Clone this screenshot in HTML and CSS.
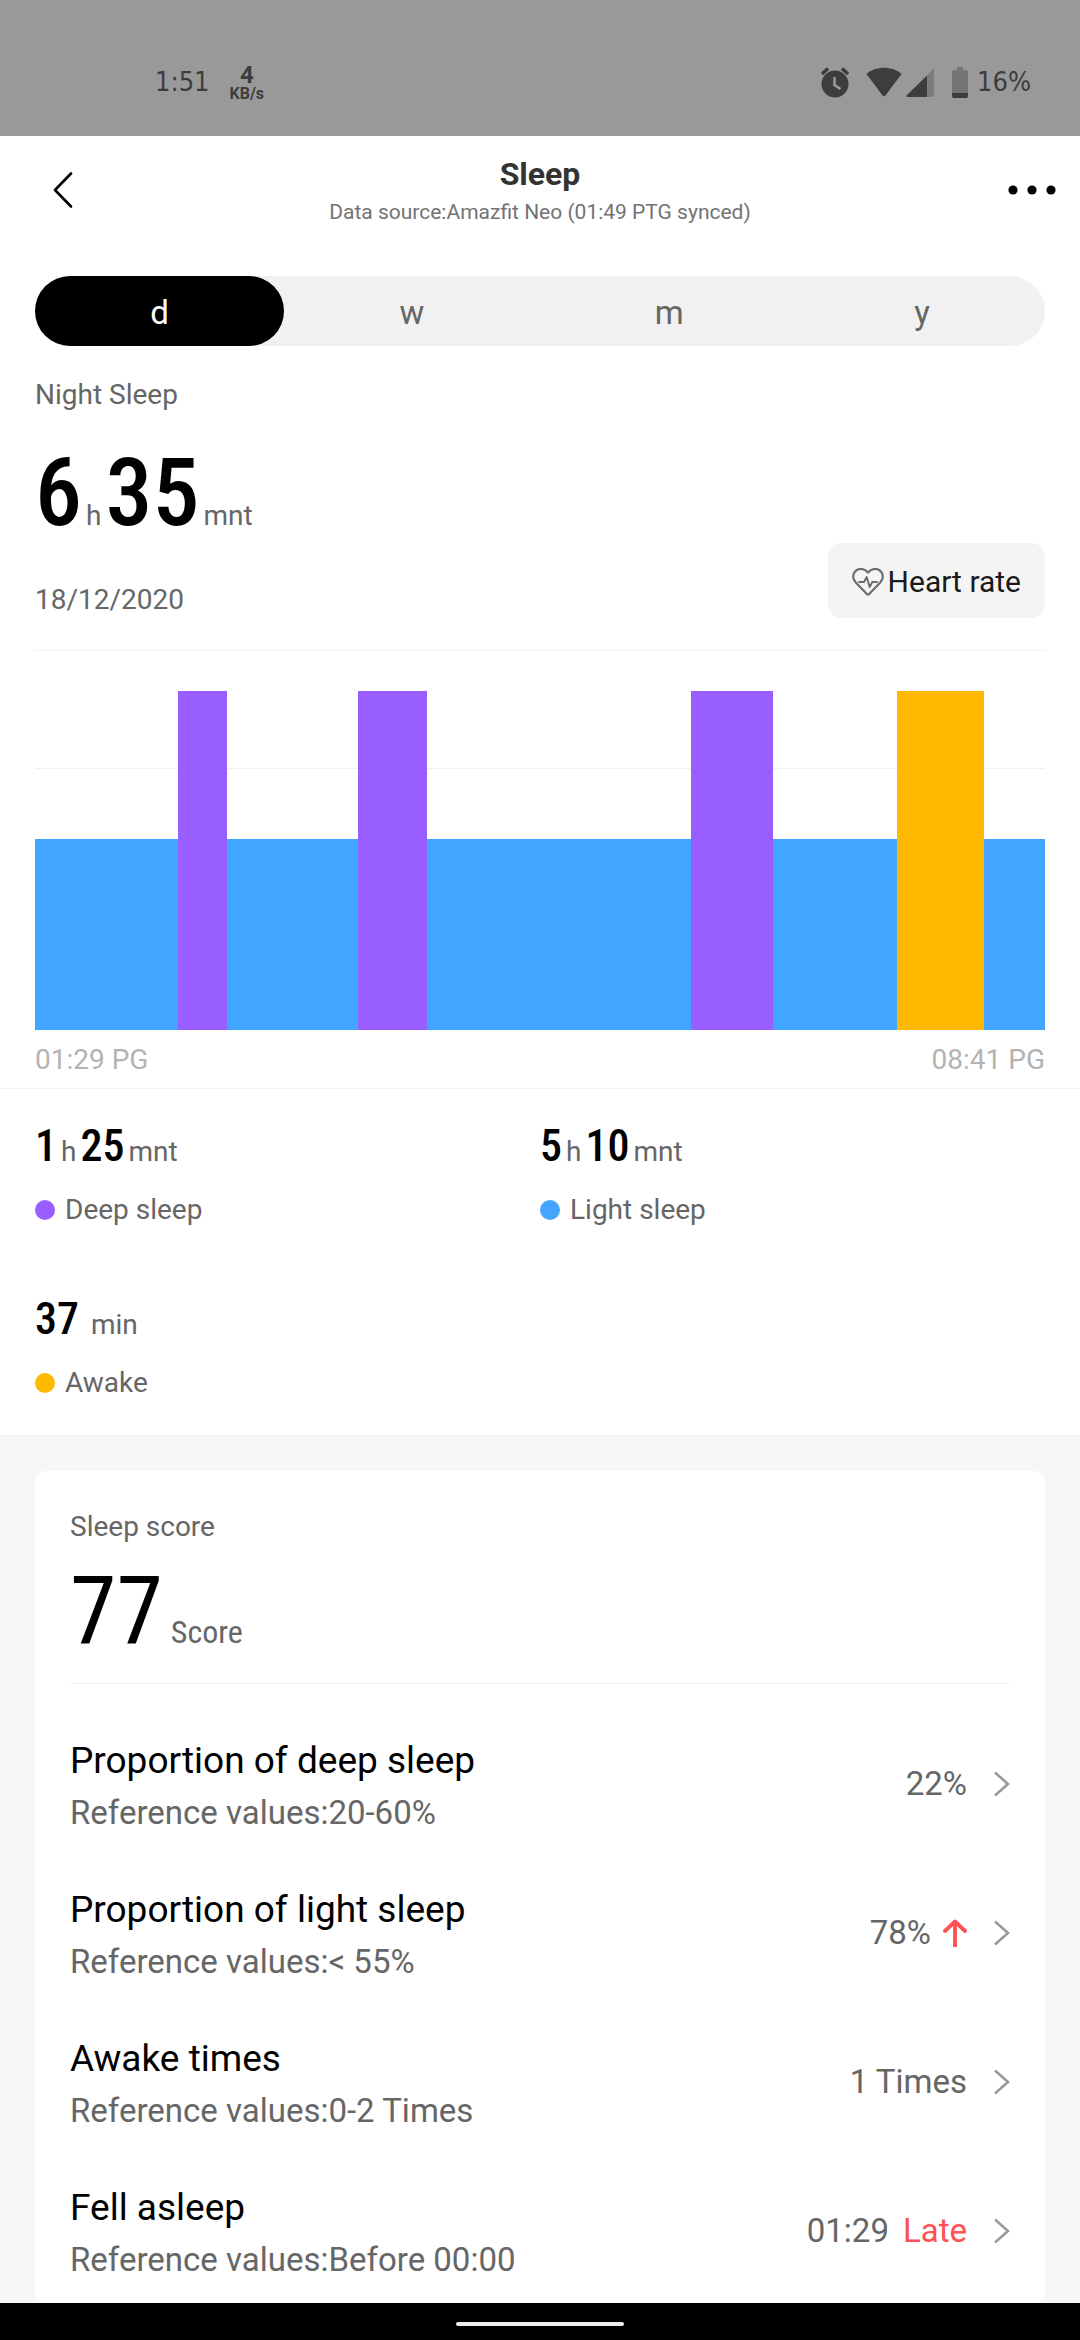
FILE: index.html
```html
<!DOCTYPE html>
<html lang="en">
<head>
<meta charset="utf-8">
<meta name="viewport" content="width=device-width, initial-scale=1">
<title>Sleep</title>
<link rel="stylesheet" href="styles.css">
</head>
<body>
<div class="app">
  <div class="statusbar">
    <span class="clock">1:51</span>
    <span class="netspeed"><b>4</b><small>KB/s</small></span>
    <span class="status-icons">
      <svg class="ic-alarm" width="30" height="32" viewBox="0 0 30 32"><circle cx="15" cy="18" r="13.500" fill="#3d3d3d"/><path d="M2 8 8 2.500M28 8 22 2.500" stroke="#3d3d3d" stroke-width="3.500" fill="none"/><path d="M14.500 11v8l6 4" stroke="#999" stroke-width="2.600" fill="none"/></svg>
      <svg class="ic-wifi" width="36" height="30" viewBox="0 0 36 30"><path d="M.5 7C5 3 11 .8 18 .8S31 3 35.500 7L19.500 28.500q-1.500 1.600-3 0z" fill="#3d3d3d"/></svg>
      <svg class="ic-signal" width="28" height="29" viewBox="0 0 28 29"><path d="M28 0v27q0 2-2 2H20V8.500z" fill="#7c7c7c"/><path d="M21 7.500V29H1.500q-2-.5-.5-2z" fill="#3d3d3d"/></svg>
      <svg class="ic-battery" width="16" height="31" viewBox="0 0 16 31"><path d="M5 0h6v3h3q2 0 2 2v22H0V5q0-2 2-2h3z" fill="#747474"/><path d="M0 26h16v3q0 2-2 2H2q-2 0-2-2z" fill="#3d3d3d"/></svg>
      <span class="percent">16%</span>
    </span>
  </div>

  <header class="header">
    <button class="icon-btn back" aria-label="Back"><svg width="20" height="36" viewBox="0 0 20 36"><path d="M18 1.500 2 18 18 34.500" fill="none" stroke="#000" stroke-width="2.600" stroke-linecap="round" stroke-linejoin="round"/></svg></button>
    <div class="heading">
      <h1>Sleep</h1>
      <p>Data source:Amazfit Neo (01:49 PTG synced)</p>
    </div>
    <button class="icon-btn more" aria-label="More"><svg width="48" height="12" viewBox="0 0 48 12"><circle cx="5" cy="6" r="4.600"/><circle cx="24" cy="6" r="4.600"/><circle cx="43" cy="6" r="4.600"/></svg></button>
  </header>

  <main class="content">
    <section class="overview">
      <nav class="tabs">
        <button class="tab active">d</button>
        <button class="tab">w</button>
        <button class="tab">m</button>
        <button class="tab">y</button>
      </nav>
      <p class="caption night">Night Sleep</p>
      <p class="total"><b>6</b><span>h</span><b>35</b><span>mnt</span></p>
      <div class="date-row">
        <p class="caption">18/12/2020</p>
        <button class="heart-btn"><svg width="32" height="28" viewBox="0 0 32 28"><path d="M16 4.500C13.500 1.500 11 1 8.800 1 4.500 1 1.200 4.200 1.200 8.400c0 2.600 1 4.600 2.800 6.400l10.600 11q1.400 1.200 2.800 0L28 14.800c1.800-1.800 2.800-3.800 2.800-6.400C30.800 4.200 27.500 1 23.200 1 21 1 18.500 1.500 16 4.500z" fill="none" stroke="#6c6c6c" stroke-width="2.200" stroke-linejoin="round"/><path d="M7 14h5l2.700-5 3 10 2.600-5H25" fill="none" stroke="#6c6c6c" stroke-width="1.900" stroke-linejoin="round" stroke-linecap="round"/></svg>Heart rate</button>
      </div>
      <div class="chart">
        <i class="light" style="flex-grow:143"></i><i class="deep" style="flex-grow:49"></i><i class="light" style="flex-grow:131"></i><i class="deep" style="flex-grow:69"></i><i class="light" style="flex-grow:264"></i><i class="deep" style="flex-grow:82"></i><i class="light" style="flex-grow:124"></i><i class="awake" style="flex-grow:87"></i><i class="light" style="flex-grow:61"></i>
      </div>
      <div class="axis"><span>01:29 PG</span><span>08:41 PG</span></div>
    </section>

    <section class="stats">
      <div class="stat">
        <p class="amount"><b>1</b><span>h</span><b>25</b><span>mnt</span></p>
        <p class="caption key"><i class="deep"></i>Deep sleep</p>
      </div>
      <div class="stat">
        <p class="amount"><b>5</b><span>h</span><b>10</b><span>mnt</span></p>
        <p class="caption key"><i class="light"></i>Light sleep</p>
      </div>
      <div class="stat">
        <p class="amount wide"><b>37</b><span>min</span></p>
        <p class="caption key"><i class="awake"></i>Awake</p>
      </div>
    </section>

    <section class="card">
      <div class="score">
        <p class="caption">Sleep score</p>
        <p class="points"><b>77</b><span>Score</span></p>
      </div>
      <a class="row" href="#deep">
        <span class="row-text"><strong>Proportion of deep sleep</strong><span>Reference values:20-60%</span></span>
        <span class="row-value">22%<svg class="chevron" width="17" height="26" viewBox="0 0 17 26"><path d="M2 1.500 15 13 2 24.500"/></svg></span>
      </a>
      <a class="row" href="#light">
        <span class="row-text"><strong>Proportion of light sleep</strong><span>Reference values:&lt; 55%</span></span>
        <span class="row-value">78%<svg class="up" width="24" height="28" viewBox="0 0 24 28"><path d="M2 12 12 2.500 22 12M12 3v24" fill="none" stroke="#ff5153" stroke-width="3.800" stroke-linecap="round" stroke-linejoin="round"/></svg><svg class="chevron" width="17" height="26" viewBox="0 0 17 26"><path d="M2 1.500 15 13 2 24.500"/></svg></span>
      </a>
      <a class="row" href="#awake">
        <span class="row-text"><strong>Awake times</strong><span>Reference values:0-2 Times</span></span>
        <span class="row-value">1 Times<svg class="chevron" width="17" height="26" viewBox="0 0 17 26"><path d="M2 1.500 15 13 2 24.500"/></svg></span>
      </a>
      <a class="row" href="#asleep">
        <span class="row-text"><strong>Fell asleep</strong><span>Reference values:Before 00:00</span></span>
        <span class="row-value">01:29<em>Late</em><svg class="chevron" width="17" height="26" viewBox="0 0 17 26"><path d="M2 1.500 15 13 2 24.500"/></svg></span>
      </a>
    </section>
  </main>
  <div class="navbar"><span class="pill"></span></div>
</div>
</body>
</html>
```
FILE: styles.css
```css
* { box-sizing: border-box; }
body { margin: 0; font-family: Roboto, "Liberation Sans", sans-serif; color: #000; background: #fff; }
h1, p { margin: 0; }
button { border: 0; padding: 0; background: none; font: inherit; color: inherit; }
a { color: inherit; text-decoration: none; }
svg { display: block; flex: none; }

.app { height: 100vh; display: flex; flex-direction: column; }

.statusbar { flex: none; display: flex; align-items: center; height: 136px; padding: 28px 49px 0 155px; background: #999; color: #3d3d3d; }
.clock, .percent { font-family: "DejaVu Sans Condensed", "DejaVu Sans", sans-serif; font-size: 27px; line-height: 32px; }
.netspeed { display: flex; flex-direction: column; align-items: center; margin-left: 20px; }
.netspeed b { font-size: 24px; line-height: 24px; font-weight: 700; }
.netspeed small { font-size: 16px; line-height: 14px; font-weight: 700; }
.status-icons { display: flex; align-items: center; margin-left: auto; }
.ic-wifi { margin-left: 16px; }
.ic-signal { margin-left: 4px; }
.ic-battery { margin-left: 18px; }
.percent { margin-left: 9px; }

.header { flex: none; display: grid; grid-template-columns: 1fr auto 1fr; align-items: center; padding: 18px 24px 16px; }
.icon-btn { display: flex; }
.back { justify-self: start; padding-left: 29px; }
.more { justify-self: end; }
.heading { text-align: center; }
.heading h1 { font-size: 32px; line-height: 40px; font-weight: 700; color: #333; }
.heading p { margin-top: 4px; font-size: 21px; line-height: 28px; color: #737373; }

.content { flex: 1; min-height: 0; overflow-y: auto; scrollbar-width: none; background: #f7f7f7; }
.caption { font-size: 28px; line-height: 36px; color: #666; }

.overview { padding: 34px 35px 10px; background: #fff; border-bottom: 1px solid #f0f0f0; }
.tabs { display: flex; height: 70px; border-radius: 35px; background: #f1f1f1; }
.tab { flex: 1 1 auto; padding-top: 2px; border-radius: 35px; font-size: 33px; color: #666; }
.tab.active { background: #000; color: #fff; }
.night { margin-top: 31px; }

.total, .amount, .points { display: flex; align-items: baseline; font-family: "Roboto Condensed", "Liberation Sans Narrow", Roboto, sans-serif; }
.total b, .amount b { font-weight: 500; }
.total span, .amount span { font-family: Roboto, sans-serif; font-size: 28px; color: #666; }
.total { margin-top: 30px; gap: 4px; }
.total b { font-size: 94px; line-height: 100px; }
.date-row { display: flex; justify-content: space-between; align-items: flex-end; }
.heart-btn { display: flex; align-items: center; gap: 4px; height: 75px; padding: 2px 24px 0; border-radius: 14px; background: #f4f4f4; font-size: 30px; color: #1a1a1a; }

.chart { display: flex; align-items: flex-end; height: 380px; margin-top: 32px; border-top: 1px solid #f0f0f0; background: linear-gradient(#f0f0f0, #f0f0f0) 0 117px / 100% 1px no-repeat; }
.deep { background: #985eff; }
.light { background: #42a5ff; }
.awake { background: #ffb900; }
.chart .deep, .chart .awake { height: 339px; }
.chart .light { height: 191px; }
.axis { display: flex; justify-content: space-between; margin-top: 12px; font-size: 28px; line-height: 36px; color: #b3b3b3; }

.stats { display: grid; grid-template-columns: 1fr 1fr; row-gap: 65px; padding: 31px 35px 34px; background: #fff; border-bottom: 1px solid #f0f0f0; }
.amount { gap: 4px; }
.amount.wide { gap: 12px; }
.amount b { font-size: 44px; line-height: 52px; }
.key { display: flex; align-items: center; gap: 10px; margin-top: 20px; }
.key i { width: 20px; height: 20px; border-radius: 50%; }

.card { margin: 35px 35px 0; padding: 38px 35px 0; border-radius: 10px; background: #fff; }
.score { padding-bottom: 22px; margin-bottom: 24px; border-bottom: 1px solid #f0f0f0; }
.points { margin-top: 16px; gap: 8px; }
.points b { font-size: 94px; line-height: 100px; font-weight: 400; }
.points span { font-size: 32px; color: #666; }

.row { display: flex; justify-content: space-between; align-items: center; padding: 31px 0 24px; }
.row-text { display: flex; flex-direction: column; gap: 10px; color: #666; font-size: 33px; line-height: 40px; }
.row-text strong { font-size: 37px; line-height: 44px; font-weight: 400; color: #000; }
.row-value { display: flex; align-items: center; padding-bottom: 4px; font-size: 33px; line-height: 40px; color: #666; }
.row-value em { margin-left: 14px; font-style: normal; color: #ff5153; }
.up { margin-left: 12px; }
.chevron { margin-left: 26px; fill: none; stroke: #999; stroke-width: 2.5px; }

.navbar { flex: none; display: flex; align-items: center; justify-content: center; height: 37px; padding-top: 5px; background: #000; }
.pill { width: 168px; height: 4px; border-radius: 2px; background: #eee; }
```
